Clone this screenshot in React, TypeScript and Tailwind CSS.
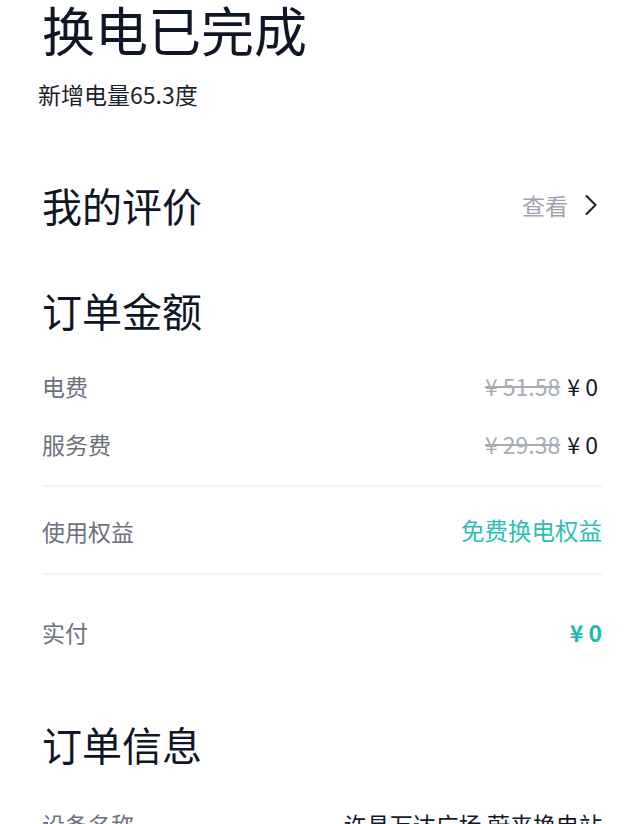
// 换电订单详情页
import { ChevronRight } from "lucide-react";

const font = { fontFamily: '"Noto Sans CJK SC", "Noto Sans", sans-serif' };

function PriceRow({ label, origin, pay }: { label: string; origin: string; pay: string }) {
  return (
    <div className="flex items-center justify-between h-[30px] pr-[4px]">
      <span className="text-[23px] text-[#6c717d]">{label}</span>
      <span className="flex items-center gap-[7px] text-[23px]">
        <span className="text-[#a8acb5] line-through">¥ {origin}</span>
        <span className="text-[#141a2b]">¥ {pay}</span>
      </span>
    </div>
  );
}

export default function App() {
  return (
    <div className="w-[640px] h-[824px] overflow-hidden bg-white pl-[42px] pr-[38px] leading-none" style={font}>
      {/* 头部 */}
      <h1 className="text-[53px] leading-[58px] text-[#0f1626] font-normal">换电已完成</h1>
      <p className="mt-[22px] text-[23px] leading-[28px] text-[#1a1f2e] -ml-[4px]">新增电量65.3度</p>

      {/* 我的评价 */}
      <div className="mt-[73px] flex items-center justify-between h-[48px]">
        <h2 className="text-[40px] text-[#0f1626]">我的评价</h2>
        <span className="flex items-center gap-[5px] text-[23px] text-[#9fa3ad]">
          查看
          <ChevronRight size={36} strokeWidth={1.4} className="text-[#1b2030] -mr-[7px]" />
        </span>
      </div>

      {/* 订单金额 */}
      <h2 className="mt-[57px] h-[48px] flex items-center text-[40px] text-[#0f1626]">订单金额</h2>
      <div className="mt-[37px] flex flex-col gap-[28px]">
        <PriceRow label="电费" origin="51.58" pay="0" />
        <PriceRow label="服务费" origin="29.38" pay="0" />
      </div>

      <div className="mt-[26px] h-[2px] bg-[#f3f3f4]" />
      <div className="mt-[29px] flex items-center justify-between h-[30px]">
        <span className="text-[23px] text-[#6c717d]">使用权益</span>
        <span className="text-[23.5px] text-[#2bbfb6]">免费换电权益</span>
      </div>
      <div className="mt-[27px] h-[2px] bg-[#f3f3f4]" />

      <div className="mt-[42px] flex items-center justify-between h-[30px]">
        <span className="text-[23px] text-[#6c717d]">实付</span>
        <span className="text-[23px] font-bold text-[#1fb9b1]">¥ 0</span>
      </div>

      {/* 订单信息 */}
      <h2 className="mt-[73px] h-[48px] flex items-center text-[40px] text-[#0f1626]">订单信息</h2>
      <div className="mt-[41px] flex items-center justify-between h-[30px]">
        <span className="text-[23px] text-[#6c717d]">设备名称</span>
        <span className="text-[23px] text-[#141a2b]">许昌万达广场 蔚来换电站</span>
      </div>
    </div>
  );
}
